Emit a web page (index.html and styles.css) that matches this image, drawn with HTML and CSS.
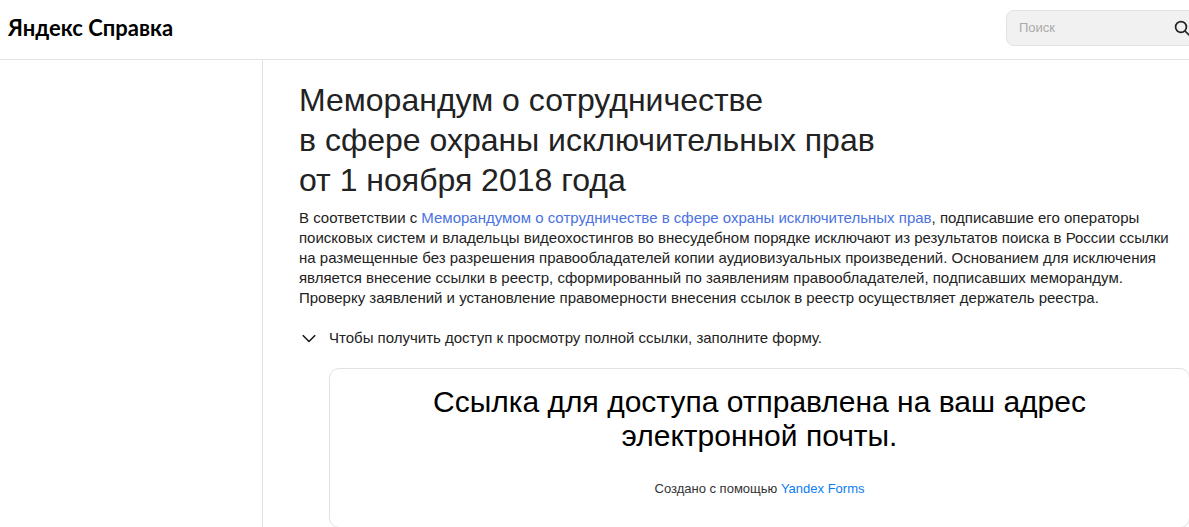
FILE: index.html
```html
<!DOCTYPE html>
<html lang="ru">
<head>
<meta charset="utf-8">
<meta name="viewport" content="width=device-width, initial-scale=1">
<title>Яндекс Справка</title>
<link rel="stylesheet" href="styles.css">
</head>
<body class="page">
<header class="header">
  <a class="logo" href="#">Яндекс Справка</a>
  <form class="search" role="search">
    <input class="search-input" type="text" placeholder="Поиск" aria-label="Поиск">
    <button class="search-button" type="button" aria-label="Найти">
      <svg class="search-icon" viewBox="0 0 16 16" aria-hidden="true"><circle cx="7" cy="7" r="5.4"/><path d="M11 11l4.2 4.2"/></svg>
    </button>
  </form>
</header>
<div class="layout">
  <aside class="sidebar"></aside>
  <main class="content">
    <h1 class="title">Меморандум о сотрудничестве<br>в сфере охраны исключительных прав<br>от 1 ноября 2018 года</h1>
    <p class="text">В соответствии с <a class="link" href="#">Меморандумом о сотрудничестве в сфере охраны исключительных прав</a>, подписавшие его операторы поисковых систем и владельцы видеохостингов во внесудебном порядке исключают из результатов поиска в России ссылки на размещенные без разрешения правообладателей копии аудиовизуальных произведений. Основанием для исключения является внесение ссылки в реестр, сформированный по заявлениям правообладателей, подписавших меморандум. Проверку заявлений и установление правомерности внесения ссылок в реестр осуществляет держатель реестра.</p>
    <button class="toggle" type="button" aria-expanded="true">
      <svg class="chevron" viewBox="0 0 20 20" aria-hidden="true"><path d="M3.8 7.2l6.2 6.3 6.2-6.3"/></svg>
      <span>Чтобы получить доступ к просмотру полной ссылки, заполните форму.</span>
    </button>
    <section class="card">
      <h2 class="message">Ссылка для доступа отправлена на ваш адрес электронной почты.</h2>
      <p class="credit">Создано с помощью <a class="credit-link" href="#">Yandex Forms</a></p>
    </section>
  </main>
</div>
</body>
</html>
```
FILE: styles.css
```css
* {
  box-sizing: border-box;
}

.page {
  display: flex;
  flex-direction: column;
  min-height: 100vh;
  margin: 0;
  overflow-x: hidden;
  background: #fff;
  color: #222;
  font-family: "Liberation Sans", Arial, sans-serif;
  font-size: 15px;
  line-height: 20px;
}

.header {
  display: flex;
  align-items: center;
  justify-content: space-between;
  height: 60px;
  padding: 0 0 4px 8px;
  border-bottom: 1px solid #e2e2e2;
}

.logo {
  color: #000;
  font-family: Lato, Roboto, sans-serif;
  font-size: 22px;
  font-weight: 700;
  line-height: 28px;
  text-decoration: none;
}

.search {
  display: flex;
  align-items: center;
  width: 192px;
  height: 36px;
  margin-right: -9px;
  padding: 0 7px 0 12px;
  border: 1px solid #e2e2e2;
  border-radius: 8px;
  background: #f1f1f1;
}

.search-input {
  flex: 1;
  min-width: 0;
  padding: 0;
  border: 0;
  outline: 0;
  background: transparent;
  color: #222;
  font-family: inherit;
  font-size: 13px;
}

.search-input::placeholder {
  color: #aaa;
}

.search-button {
  display: flex;
  padding: 0;
  border: 0;
  background: transparent;
}

.search-icon {
  width: 16px;
  height: 16px;
  fill: none;
  stroke: #222;
  stroke-width: 1.7;
}

.layout {
  display: flex;
  flex: 1;
}

.sidebar {
  flex: none;
  width: 263px;
  border-right: 1px solid #e2e2e2;
}

.content {
  flex: 1;
  padding: 20px 0 0 36px;
}

.title {
  margin: 0 0 8px;
  font-size: 32px;
  font-weight: 400;
  line-height: 40px;
}

.text {
  margin: 0 0 20px;
}

.link {
  color: #4a72e0;
  text-decoration: none;
}

.toggle {
  display: flex;
  gap: 10px;
  margin: 0 0 20px;
  padding: 0;
  border: 0;
  background: transparent;
  color: #222;
  font: inherit;
  text-align: left;
}

.chevron {
  flex: none;
  width: 20px;
  height: 20px;
  fill: none;
  stroke: #111;
  stroke-width: 1.5;
}

.card {
  margin: 0 -1px 0 30px;
  padding: 16px 80px 28px;
  border: 1px solid #e2e2e2;
  border-radius: 10px;
  text-align: center;
}

.message {
  margin: 0 0 26px;
  color: #000;
  font-size: 30px;
  font-weight: 400;
  line-height: 34px;
}

.credit {
  margin: 0;
  color: #333;
  font-size: 13px;
}

.credit-link {
  color: #0a7cf5;
  text-decoration: none;
}
```
